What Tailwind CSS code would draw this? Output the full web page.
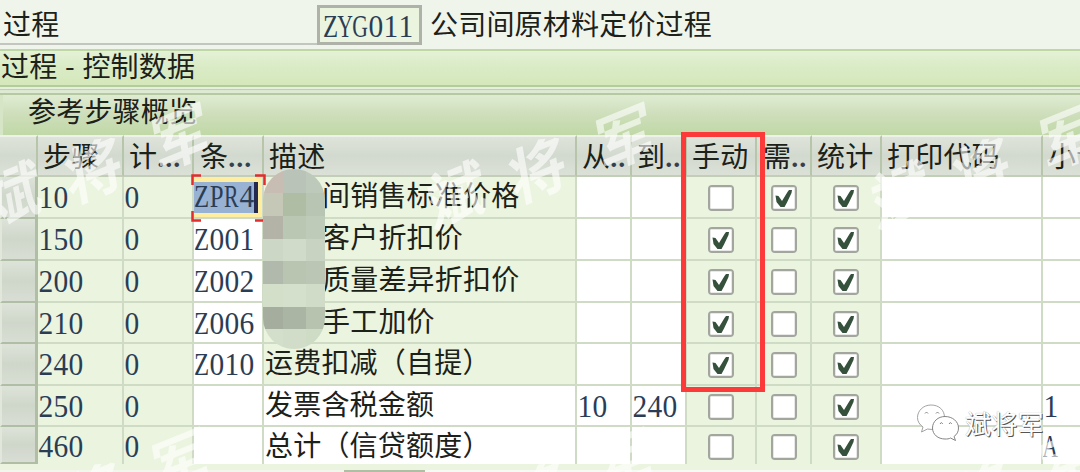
<!DOCTYPE html>
<html lang="zh-CN">
<head>
<meta charset="utf-8">
<title>过程 - 控制数据</title>
<script src="https://cdn.jsdelivr.net/npm/@tailwindcss/browser@4"></script>
</head>
<body class="relative flex h-[472px] w-[1080px] flex-col overflow-hidden bg-[#eaf4df] font-['Noto_Sans_CJK_SC',sans-serif] text-[28px] leading-[40px] tracking-[0.2px] text-[#1c211a] whitespace-nowrap">
<header class="relative flex h-[49px] shrink-0 items-start bg-[#f0f5eb]">
  <div class="h-[45px] w-[317px] border-b-2 border-[#c3c6c0] pl-[3px] pt-[3px]">过程</div>
  <div class="mt-[5px] flex h-[40px] w-[105px] items-center border-[3px] border-[#aeb2a9] bg-[#ebf4df] pl-[3px]"><span data-latin>ZYG011</span></div>
  <div class="pl-[8px] pt-[3px]">公司间原材料定价过程</div>
</header>
<section class="flex h-[38px] shrink-0 border-t-2 border-b-2 border-t-[#bfd6a7] border-b-[#b3cc9b] bg-linear-to-b from-[#e4f1d6] via-[#d9ebc5] to-[#d4e8bb] pl-px"><h1 class="-mt-[6px]">过程<span class="inline-block w-[25px] text-center">-</span>控制数据</h1></section>
<div class="h-[8px] shrink-0 border-b-2 border-[#b5c9a3] bg-linear-to-b from-[#e5efd9] from-25% via-[#b9d29f] via-40% to-[#dfead4] to-60%"></div>
<section class="flex h-[40px] shrink-0 border-l-[3px] border-[#d5e5c5] bg-linear-to-b from-[#e0ecd2] via-[#cddeba] to-[#c0d8a6] pl-[25px]"><h2 class="-mt-[5px]">参考步骤概览</h2></section>
<main id="grid" class="grid shrink-0 grid-cols-[38px_86px_70px_70px_313px_55px_55px_70px_55px_70px_161px_40px] grid-rows-[42px_42px_42px_42px_41px_42px_41px_37px] overflow-hidden"></main>
<footer class="flex grow items-end bg-[#eaf4df]"><i class="h-[2px] w-[344px] bg-[#f2f6ed]"></i><i class="h-[2px] w-[81px] bg-[#b1bda4]"></i><i class="h-[2px] grow bg-[#f7f9f5]"></i></footer>

<!-- selection brackets -->
<svg class="absolute left-[190px] top-[173px]" width="78" height="50" fill="none" stroke="#e42c2e" stroke-width="2.5"><path d="M11 2.5H2.5V12M65 2.5H74.500V12M11 47.500H2.500V38M65 47.500H73"/></svg>

<!-- mosaic patch -->
<div class="absolute left-[263px] top-[169px] grid h-[180px] w-[62px] grid-cols-[20px_23px_19px] grid-rows-[24px_23px_23px_22px_23px_23px_22px_20px] overflow-hidden rounded-[31px]">
<i class="bg-[#c8bdb3]"></i><i class="bg-[#b9c3b8]"></i><i class="bg-[#bdc9bb]"></i>
<i class="bg-[#c6c8b7]"></i><i class="bg-[#afbda4]"></i><i class="bg-[#b8c5b2]"></i>
<i class="bg-[#b4b3a8]"></i><i class="bg-[#bac7b2]"></i><i class="bg-[#becbb8]"></i>
<i class="bg-[#ccd7c5]"></i><i class="bg-[#d0dcc9]"></i><i class="bg-[#c8d3c1]"></i>
<i class="bg-[#b0b9ab]"></i><i class="bg-[#b9c4b1]"></i><i class="bg-[#bbc6b4]"></i>
<i class="bg-[#d4dfca]"></i><i class="bg-[#d5e0cc]"></i><i class="bg-[#d0dcc7]"></i>
<i class="bg-[#a5ad9f]"></i><i class="bg-[#abb5a4]"></i><i class="bg-[#b7c2af]"></i>
<i class="bg-[#d3dfca]"></i><i class="bg-[#d1ddc8]"></i><i class="bg-[#cedbc5]"></i>
</div>

<!-- repeated author watermark -->
<div id="marks" class="pointer-events-none absolute inset-0 overflow-hidden font-bold text-white/60"></div>

<div class="absolute left-[681px] top-[132px] h-[260px] w-[84px] border-[5px] border-[#fc3a3a]"></div>

<!-- account badge -->
<div class="absolute left-[916px] top-[403px] flex items-center">
<svg width="44" height="40" viewBox="0 0 44 40" fill="#fff" stroke="#777" stroke-width=".9"><path stroke="#999" d="M15 2C7 2 1.500 8 1.500 14.500c0 4 2 7 5.500 9.500l-1.500 5 6-3c10 2 17-3 17-11.500C28.500 7 23 2 15 2Z"/><path d="M29 13.500c-7 0-12.500 5-12.500 11.500S22 36 29 36c2 0 4 0 5.500-1l5 2.500-1.500-4c3-2 4.500-5 4.500-8.500 0-6.500-6-11.500-13.500-11.500Z"/><path fill="none" d="M9 10.500q1.500-3 3 0M20 10.500q1.500-3 3 0M24 21q1.300-3 2.800 0M33 21q1.300-3 2.800 0"/></svg>
<span class="ml-[5px] text-[26px] text-white [text-shadow:1px_1px_0_#555,0_0_1px_#999]">斌将军</span>
</div>
<script>
const rows = [
  ['10','0','ZPR4','间销售标准价格','','',0,1,1,'',''],
  ['150','0','Z001','客户折扣价','','',1,0,1,'',''],
  ['200','0','Z002','质量差异折扣价','','',1,0,1,'',''],
  ['210','0','Z006','手工加价','','',1,0,1,'',''],
  ['240','0','Z010','运费扣减（自提）','','',1,0,1,'',''],
  ['250','0','','发票含税金额','10','240',0,0,1,'','1'],
  ['460','0','','总计（信贷额度）','','',0,0,1,'','A']
];
const latin = s => `<span class="inline-flex h-[32px] font-['Liberation_Serif',serif] text-[31px] leading-[32px] tracking-normal text-[#2b3d55]">` + [...s].map(c => '<b class="flex w-[15px] justify-center font-normal"><span class="' + (/\d/.test(c) ? 'scale-x-95' : /[ZP]/.test(c) ? 'scale-x-80' : 'scale-x-70') + '">' + c + '</span></b>').join('') + '</span>';
const box = on => '<svg class="relative top-px" width="26" height="26" viewBox="0 0 26 26"><rect x="1" y="1" width="24" height="24" rx="3" fill="#fff" stroke="#a2a69f" stroke-width="2"/><rect x="2.500" y="2.500" width="21" height="21" rx="1" fill="none" stroke="#e8e9e7"/>' + (on ? '<path fill="#35503b" d="M4.500 10.500 7.500 11l3.500 5L16.500 7 18 5h3l-.5 3-4.500 9.500-2.500 4.500H9.500L5.500 17Z"/>' : '') + '</svg>';
const heads = ['','步骤','计<i>...','条<i>...','描述','从<i>..','到<i>..','手动','需<i>..','统计','打印代码','小计'];
const pads = ['','pl-[5px]','pl-[5px]','pl-[6px]','pl-[5px]','pl-[5px]','pl-[5px]','pl-[5px]','pl-[6px]','pl-[5px]','pl-[5px]','pl-[5px]'];
let h = '';
heads.forEach((t, i) => {
  t = t.replace(/<i>(.*)/, `<span class="inline-block font-['Liberation_Serif',serif] font-bold tracking-[1px] text-[#34404f]">$1</span>`);
  h += '<div class="overflow-hidden border-t-2 border-t-[#edf1e9] border-r-2 border-r-[#b7c6aa] border-b-2 border-b-[#c2ceb7] bg-linear-to-b from-[#dfe4db] via-[#d2d9ce] to-[#dbe1d6] ' + pads[i] + '"><div class="-mt-[2px]">' + t + '</div></div>';
});
rows.forEach((r, n) => {
  h += '<div class="border-r-[3px] border-b-2 border-l-2 border-[#afbea5] border-l-[#e1e7db] bg-linear-to-b from-[#dde3d8] via-[#cfd6ca] to-[#d8ded3]"></div>';
  r.forEach((v, i) => {
    const white = i === 4 || i === 5 || i > 8 || (i === 2 && n) || (i === 3 && n > 4);
    const line = n < 6 ? 'border-b-2 ' : '';
    let c;
    if (i > 5 && i < 9) c = '<div class="flex h-full items-center justify-center">' + box(v) + '</div>';
    else if (i === 3) c = '<div class="-mt-[2px] leading-[38px] ' + (n < 4 ? 'pl-[58px]' : 'pl-[1px]') + '">' + v + '</div>';
    else if (i === 2 && !n) c = '<div class="flex h-full w-full items-center bg-[#ffeda0]"><div class="flex h-[31px] w-[64px] items-center border-r-4 border-[#252a50] bg-[#98b2d3]">' + latin(v) + '</div></div>';
    else c = '<div class="flex h-full items-center pt-[2px]">' + latin(v) + '</div>';
    h += '<div class="overflow-hidden border-r-2 border-[#d0dbc6] ' + line + (white ? 'bg-white' : 'bg-[#eaf4df]') + '">' + c + '</div>';
  });
});
document.getElementById('grid').innerHTML = h;
document.querySelectorAll('[data-latin]').forEach(e => e.innerHTML = latin(e.textContent));
let m = '';
for (const y of [0, 325]) for (const x of [-444, 0, 444, 888])
  for (const [c, dx, dy] of [['斌', 12, 191], ['将', 93, 167], ['军', 180, 134]])
    m += '<span class="absolute -ml-[36px] -mt-[36px] flex size-[72px] -rotate-[22deg] -skew-x-12 items-center justify-center text-[60px]" style="left:' + (x + dx) + 'px;top:' + (y + dy) + 'px">' + c + '</span>';
document.getElementById('marks').innerHTML = m;
</script>
</body>
</html>
